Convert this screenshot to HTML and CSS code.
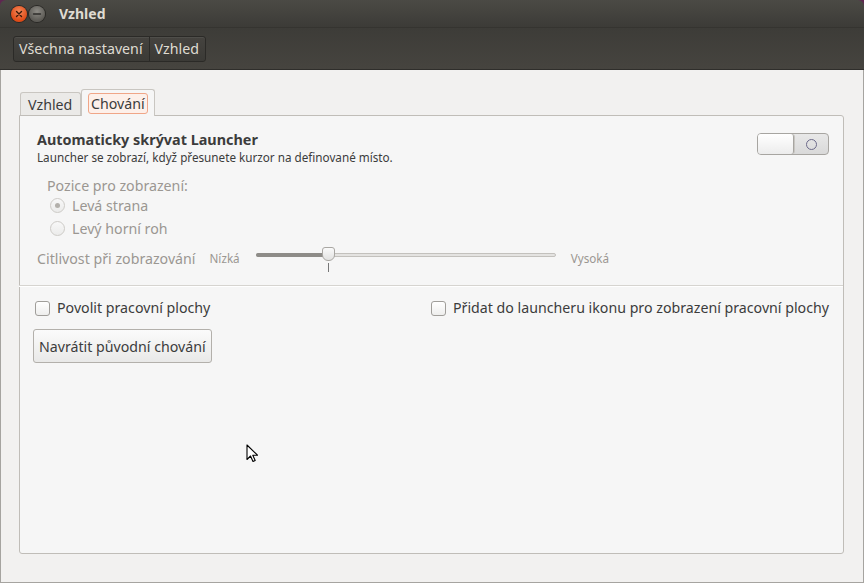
FILE: index.html
```html
<!DOCTYPE html>
<html lang="cs">
<head>
<meta charset="utf-8">
<link rel="stylesheet" href="styles.css">
</head>
<body>
<div class="window">
  <div class="titlebar">
    <div class="wbtns">
      <span class="wbtn close"><svg width="16" height="16" viewBox="0 0 16 16"><path d="M5.5 5.5l5 5M10.5 5.5l-5 5" stroke="#3a1a0a" stroke-width="1.4" stroke-linecap="round"/></svg></span>
      <span class="wbtn min"><svg width="16" height="16" viewBox="0 0 16 16"><path d="M4.5 8h7" stroke="#2e2d2a" stroke-width="1.4" stroke-linecap="round"/></svg></span>
    </div>
    <div class="title">Vzhled</div>
  </div>
  <div class="toolbar">
    <div class="crumbs">
      <span class="crumb">Všechna nastavení</span><span class="crumb">Vzhled</span>
    </div>
  </div>
  <div class="content">
    <div class="tabs">
      <span class="tab">Vzhled</span>
      <span class="tab active"><span class="focus">Chování</span></span>
    </div>
    <div class="panel">
      <div class="row-head">
        <div>
          <div class="h">Automaticky skrývat Launcher</div>
          <div class="sub">Launcher se zobrazí, když přesunete kurzor na definované místo.</div>
        </div>
        <div class="switch"><span class="sw-on"></span><span class="sw-off"><span class="ring"></span></span></div>
      </div>
      <div class="dim group">
        <div class="glabel">Pozice pro zobrazení:</div>
        <label class="radio"><span class="rdot checked"></span>Levá strana</label>
        <label class="radio"><span class="rdot"></span>Levý horní roh</label>
      </div>
      <div class="dim sens">
        <span class="slabel">Citlivost při zobrazování</span>
        <span class="small">Nízká</span>
        <span class="slider">
          <span class="track"></span>
          <span class="fill"></span>
          <span class="thumb"></span>
          <span class="tick"></span>
        </span>
        <span class="small">Vysoká</span>
      </div>
      <div class="sep"></div>
      <div class="checks">
        <label class="check"><span class="cbox"></span>Povolit pracovní plochy</label>
        <label class="check"><span class="cbox"></span>Přidat do launcheru ikonu pro zobrazení pracovní plochy</label>
      </div>
      <button class="btn">Navrátit původní chování</button>
    </div>
  </div>
  <svg class="cursor" width="14" height="20" viewBox="0 0 14 20"><path d="M1 1v14.5l3.5-3.5 2.5 5.5 2.2-1-2.4-5.3h4.7z" fill="#fff" stroke="#000" stroke-width="1.1" stroke-linejoin="round"/></svg>
</div>
</body>
</html>
```
FILE: styles.css
```css
* { box-sizing: border-box; }
html, body { margin: 0; padding: 0; }
body {
  width: 864px; height: 583px; overflow: hidden;
  background: #5e2750;
  font-family: "Noto Sans", "Open Sans", "DejaVu Sans", sans-serif;
}
.window {
  position: relative;
  width: 864px; height: 583px;
  display: flex; flex-direction: column;
  border-radius: 6px 6px 0 0;
  overflow: hidden;
}
.titlebar {
  height: 28px;
  background: linear-gradient(#4b4a45, #3c3b37);
  display: flex; align-items: center;
  border-bottom: 1px solid #353430;
}
.wbtns { display: flex; gap: 2px; padding-left: 11px; width: 59px; }
.wbtn {
  width: 16px; height: 16px; border-radius: 50%;
  display: flex;
}
.close { background: radial-gradient(circle at 50% 35%, #f58a5c, #df4a16 70%); box-shadow: 0 0 0 1px #2a2926; }
.min { background: radial-gradient(circle at 50% 35%, #8e8c86, #5c5a55 70%); box-shadow: 0 0 0 1px #2a2926; }
.title { color: #dfdbd2; font-weight: bold; font-size: 14px; }
.toolbar {
  height: 42px;
  background: linear-gradient(#3d3c38, #46443f);
  border-bottom: 1px solid #2f2e2b;
  padding: 8px 0 0 13px;
}
.crumbs {
  display: inline-flex;
  border: 1px solid #2b2a27;
  border-radius: 3px;
  background: linear-gradient(#45433f, #3b3a36);
  box-shadow: inset 0 1px 0 rgba(255,255,255,0.06);
}
.crumb {
  color: #dfdbd2; font-size: 14.2px; line-height: 24px;
  padding: 0 6px 0 5px;
}
.crumb + .crumb { border-left: 1px solid #2b2a27; }
.content {
  flex: 1;
  background: #f2f1f0;
  border-left: 1px solid #a6a4a0;
  border-right: 1px solid #a6a4a0;
  border-bottom: 1px solid #a6a4a0;
  padding: 18px 19px 28px 18px;
  display: flex; flex-direction: column;
}
.tabs { display: flex; align-items: flex-end; height: 27px; padding-left: 1px; }
.tab {
  font-size: 14.2px; color: #3c3c3c;
  border: 1px solid #c9c6c1; border-bottom: none;
  border-radius: 3px 3px 0 0;
  background: #ebeae8;
  padding: 2px 7px 0 7px; height: 23px;
  width: 61px;
}
.tab.active {
  height: 27px; background: #f6f6f6;
  padding: 3px 6px 0;
  width: auto;
  margin-bottom: -1px; position: relative; z-index: 1;
}
.focus {
  display: inline-block;
  border: 1px solid #f0a688; border-radius: 3px;
  padding: 0 2px; line-height: 19px;
  background: #fdf0ea;
}
.panel {
  flex: 1;
  background: #f6f6f6;
  border: 1px solid #c0bdb8;
  border-radius: 0 3px 3px 3px;
  padding: 14px 14px 0 17px;
  color: #3c3c3c;
}
.row-head { display: flex; justify-content: space-between; align-items: flex-start; }
.h { font-weight: bold; font-size: 14.4px; line-height: 19px; }
.sub { font-size: 11.7px; line-height: 16px; }
.switch {
  margin-top: 3px;
  width: 72px; height: 22px;
  border: 1px solid #a7a5a1; border-radius: 4px;
  display: flex; background: linear-gradient(#e8e8e8, #d9d9d9);
}
.sw-on { width: 36px; border-right: 1px solid #a7a5a1; border-radius: 3px; background: linear-gradient(#ffffff, #ececec); box-shadow: 1px 0 0 #c8c6c2; }
.sw-off { flex: 1; display: flex; align-items: center; justify-content: center; }
.ring { width: 11px; height: 11px; border: 1px solid #6c6a8a; border-radius: 50%; }
.dim { color: #9b9792; }
.group { padding: 12px 0 0 10px; font-size: 14.2px; }
.glabel { line-height: 17px; }
.radio { display: flex; align-items: center; line-height: 23px; gap: 7px; margin-left: 3px; }
.rdot {
  width: 15px; height: 15px; border-radius: 50%;
  border: 1px solid #cdcbc7; background: linear-gradient(#f8f8f8, #ebebea);
  display: flex; align-items: center; justify-content: center;
}
.rdot.checked::after { content: ""; width: 5px; height: 5px; border-radius: 50%; background: #b3b0ab; }
.sens { display: flex; align-items: center; margin-top: 6px; font-size: 14.2px; height: 24px; }
.slabel { margin-right: 14px; }
.small { font-size: 11.7px; }
.slider { position: relative; width: 300px; height: 24px; margin: 0 15px 0 16px; }
.track { position: absolute; left: 0; right: 0; top: 7px; height: 4px; border-radius: 2px; background: #e4e3e1; border: 1px solid #c3c1bd; }
.fill { position: absolute; left: 0; width: 70px; top: 7px; height: 4px; border-radius: 2px; background: #8e8c88; }
.thumb { position: absolute; left: 66px; top: 1px; width: 13px; height: 14px; border: 1px solid #a9a7a3; border-radius: 3px 3px 6px 6px; background: linear-gradient(#fafafa, #e2e2e1); }
.tick { position: absolute; left: 72px; top: 17px; width: 1px; height: 9px; background: #777; }
.sep { height: 1px; background: #d6d4d0; margin: 15px -14px 0 -18px; border-bottom: 1px solid #fff; box-sizing: content-box; }
.checks { display: flex; justify-content: space-between; margin: 11px 0 0 -2px; font-size: 14.2px; }
.check { display: flex; align-items: center; gap: 7px; line-height: 20px; }
.cbox { width: 15px; height: 15px; border: 1px solid #a09e9a; border-radius: 3px; background: linear-gradient(#fff, #eeeeed); }
.btn {
  margin: 11px 0 0 -4px;
  font: 14.2px "Noto Sans", "Open Sans", sans-serif; color: #3c3c3c;
  height: 34px; padding: 0 5px;
  border: 1px solid #b3b0ab; border-radius: 3px;
  background: linear-gradient(#fbfbfb, #e9e9e8);
}
.cursor { position: absolute; left: 246px; top: 444px; }
```
